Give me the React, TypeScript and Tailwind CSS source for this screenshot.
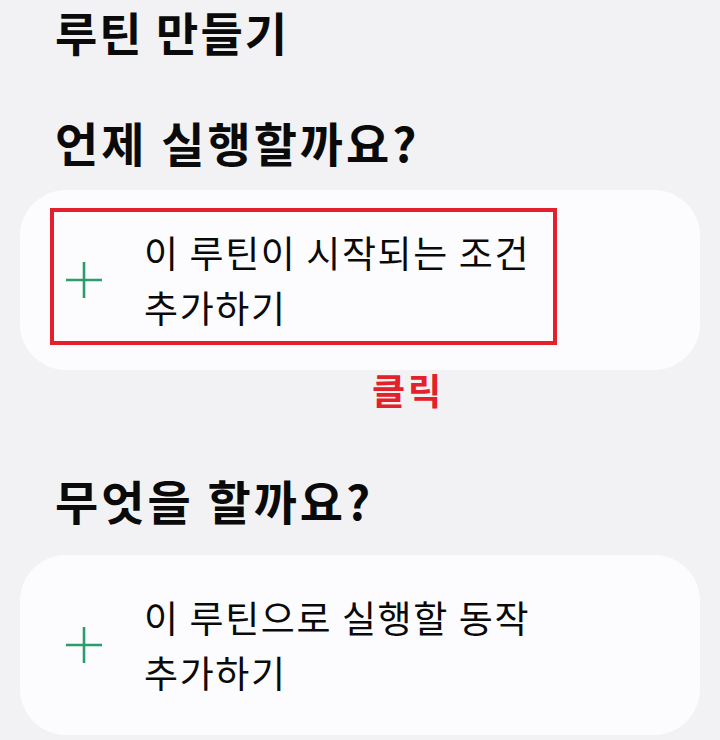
import React from "react";

const font = { fontFamily: '"Noto Sans CJK KR", "Noto Sans", sans-serif' };

function Plus() {
  return (
    <svg width="36" height="36" viewBox="0 0 36 36" className="shrink-0">
      <path d="M18 0V36M0 18H36" stroke="#2a9d6a" strokeWidth="2.6" />
    </svg>
  );
}

function Card({ lines, highlight }: { lines: string[]; highlight?: boolean }) {
  return (
    <div className="relative mx-[20px] rounded-[46px] bg-[#fcfcfe] h-[180px] flex items-center pl-[46px]">
      <Plus />
      <div className="ml-[42px] text-[37px] leading-[55px] text-[#0a0a0a] tracking-[1.6px]">
        {lines.map((l) => (
          <div key={l}>{l}</div>
        ))}
      </div>
      {highlight && (
        <div className="absolute left-[30px] top-[18px] w-[507px] h-[137px] border-[4px] border-[#e4202a]" />
      )}
    </div>
  );
}

export default function App() {
  return (
    <div className="w-[720px] h-[740px] overflow-hidden bg-[#f2f2f4]" style={font}>
      <div className="pl-[55px] pt-[2px] h-[64px] text-[46px] font-bold leading-[58px] text-[#0a0a0a] tracking-[2px]">
        루틴 만들기
      </div>
      <div className="pl-[55px] mt-[46px] h-[80px] text-[47px] font-bold leading-[64px] text-[#0a0a0a] tracking-[3px]">
        언제 실행할까요?
      </div>
      <Card lines={["이 루틴이 시작되는 조건", "추가하기"]} highlight />
      <div className="pl-[372px] h-[38px] text-[36px] font-bold leading-[38px] text-[#e4202a] tracking-[3px]">
        클릭
      </div>
      <div className="pl-[55px] mt-[60px] h-[87px] text-[47px] font-bold leading-[64px] text-[#0a0a0a] tracking-[3px]">
        무엇을 할까요?
      </div>
      <Card lines={["이 루틴으로 실행할 동작", "추가하기"]} />
    </div>
  );
}
